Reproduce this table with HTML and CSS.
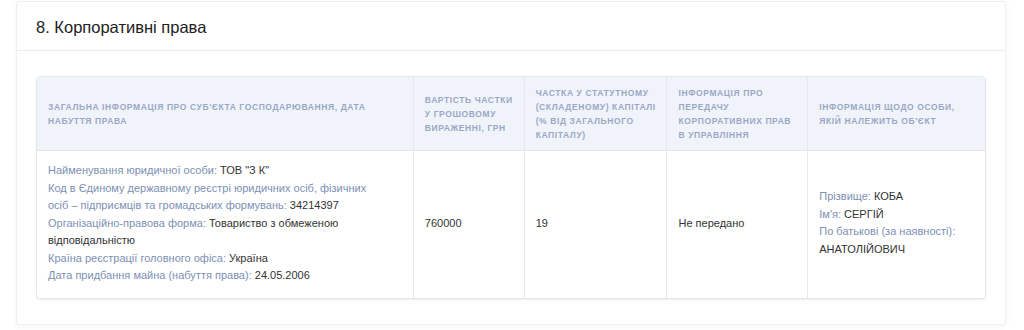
FILE: index.html
```html
<!DOCTYPE html>
<html lang="uk">
<head>
<meta charset="utf-8">
<link rel="stylesheet" href="styles.css">
</head>
<body>
<section class="card">
  <header class="card-head">
    <h2 class="card-title">8. Корпоративні права</h2>
  </header>
  <div class="card-body">
    <table class="rights">
      <colgroup>
        <col class="c1"><col class="c2"><col class="c3"><col class="c4"><col class="c5">
      </colgroup>
      <thead>
        <tr>
          <th>Загальна інформація про суб'єкта господарювання, дата набуття права</th>
          <th>Вартість частки у грошовому вираженні, грн</th>
          <th>Частка у статутному (складеному) капіталі (% від загального капіталу)</th>
          <th>Інформація про передачу корпоративних прав в управління</th>
          <th>Інформація щодо особи, якій належить об'єкт</th>
        </tr>
      </thead>
      <tbody>
        <tr>
          <td class="wide">
            <div><span class="lbl">Найменування юридичної особи:</span> ТОВ "З К"</div>
            <div><span class="lbl">Код в Єдиному державному реєстрі юридичних осіб, фізичних осіб – підприємців та громадських формувань:</span> 34214397</div>
            <div><span class="lbl">Організаційно-правова форма:</span> Товариство з обмеженою відповідальністю</div>
            <div><span class="lbl">Країна реєстрації головного офіса:</span> Україна</div>
            <div><span class="lbl">Дата придбання майна (набуття права):</span> 24.05.2006</div>
          </td>
          <td>760000</td>
          <td>19</td>
          <td>Не передано</td>
          <td>
            <div><span class="lbl">Прізвище:</span> КОБА</div>
            <div><span class="lbl">Ім'я:</span> СЕРГІЙ</div>
            <div><span class="lbl">По батькові (за наявності):</span> АНАТОЛІЙОВИЧ</div>
          </td>
        </tr>
      </tbody>
    </table>
  </div>
</section>
</body>
</html>
```

FILE: styles.css
```css
html, body {
  margin: 0;
  padding: 0;
  background: #ffffff;
}
body {
  padding: 1px 18px 6px 16px;
  font-family: "Liberation Sans", Arial, sans-serif;
  color: #333;
}
.card {
  background: #fff;
  border: 1px solid #eef0f3;
  border-radius: 3px;
  box-shadow: 0 2px 6px rgba(40, 60, 100, 0.05);
}
.card-head {
  box-sizing: border-box;
  height: 49px;
  border-bottom: 1px solid #e9ebee;
  display: flex;
  align-items: center;
  padding: 2px 19px 0;
}
.card-title {
  margin: 0;
  font-weight: normal;
  font-size: 16.5px;
  color: #222;
}
.card-body {
  padding: 25px 19px 25px 19px;
}
.rights {
  width: 950px;
  border-collapse: separate;
  border-spacing: 0;
  border: 1px solid #e4e8ee;
  border-radius: 4px;
  box-shadow: 0 1px 2px rgba(0, 0, 0, 0.08);
  overflow: hidden;
}
.c1 { width: 377px; }
.c2 { width: 111px; }
.c3 { width: 143px; }
.c4 { width: 141px; }
.c5 { width: 178px; }
.rights th {
  background: #f0f4fa;
  color: #9aa8c6;
  font-size: 8.5px;
  font-weight: bold;
  text-transform: uppercase;
  letter-spacing: 0.6px;
  line-height: 14px;
  text-align: left;
  padding: 9px 10px 8px 11px;
  border-bottom: 1px solid #e4e8ee;
  vertical-align: middle;
  height: 56px;
}
.rights th + th,
.rights td + td {
  border-left: 1px solid #e4e8ee;
}
.rights td {
  font-size: 11px;
  line-height: 17.5px;
  color: #333;
  padding: 11px 10px 13px 11px;
  vertical-align: middle;
}
.rights td.wide {
  padding-right: 24px;
}
.lbl {
  color: #7d8fb3;
}
```
